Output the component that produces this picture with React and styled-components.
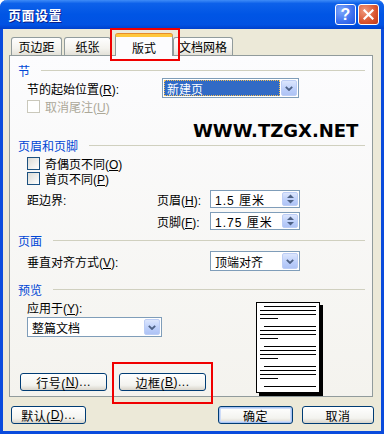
import React from 'react';
import styled, { createGlobalStyle, css } from 'styled-components';

const GlobalStyle = createGlobalStyle`
  html, body { margin: 0; padding: 0; background: #fff; }
  body {
    font-family: "Liberation Sans", "Noto Sans CJK SC", sans-serif;
    font-size: 12px;
    color: #000;
  }
`;

const Window = styled.div`
  position: relative;
  width: 384px;
  height: 434px;
  box-sizing: border-box;
  border: 3px solid #0A4BDD;
  border-top: none;
  border-radius: 7px 7px 0 0;
  background: #ECE9D8;
  display: flex;
  flex-direction: column;
`;

const TitleBar = styled.div`
  height: 29px;
  margin: 0 -3px;
  border-radius: 7px 7px 0 0;
  background: linear-gradient(#3F8CF7 0%, #0D61EA 12%, #0055E5 50%, #0152E3 85%, #0040CC 100%);
  display: flex;
  align-items: center;
  padding: 0 5px 0 8px;
  box-sizing: border-box;
`;

const Title = styled.div`
  flex: 1;
  color: #fff;
  font-weight: bold;
  font-size: 13px;
  letter-spacing: 0.5px;
  text-shadow: 1px 1px #0A1E8C;
`;

const CapButton = styled.div`
  width: 21px;
  height: 21px;
  box-sizing: border-box;
  border: 1px solid #fff;
  border-radius: 3px;
  margin-left: 2px;
  display: flex;
  align-items: center;
  justify-content: center;
  color: #fff;
  font-weight: bold;
  font-size: 16px;
  background: ${p => p.$close
    ? 'radial-gradient(circle at 30% 30%, #F09A7D, #D9532E 60%, #C0391A)'
    : 'radial-gradient(circle at 30% 30%, #7EA8FB, #3C6FEF 60%, #2155DF)'};
`;

const Body = styled.div`
  flex: 1;
  display: flex;
  flex-direction: column;
`;

const TabRow = styled.div`
  display: flex;
  align-items: flex-end;
  margin-top: 5px;
  height: 21px;
  padding-left: 8px;
`;

const Tab = styled.div`
  position: relative;
  box-sizing: border-box;
  width: ${p => p.$w}px;
  margin-left: ${p => p.$ml || 0}px;
  height: 18px;
  border: 1px solid #919B9C;
  border-bottom: none;
  border-radius: 3px 3px 0 0;
  background: linear-gradient(#FEFEFE, #F4F3EE 60%, #E3E1D8);
  display: flex;
  align-items: center;
  justify-content: center;
  font-size: 12px;
  ${p => p.$active && css`
    z-index: 2;
    height: 22px;
    margin-bottom: -1px;
    background: #FCFCFE;
    border-top: 3px solid #FFC83C;
    box-shadow: 0 -1px 0 #E68B2C;
    padding-top: 1px;
  `}
`;

const Panel = styled.div`
  position: relative;
  margin-left: 6px;
  width: 364px;
  height: 342px;
  box-sizing: border-box;
  border: 1px solid #919B9C;
  background: linear-gradient(#FCFCFE, #F4F3EE);
  padding: 7px 7px 0 8px;
  display: flex;
  flex-direction: column;
`;

const SectionHeader = styled.div`
  display: flex;
  align-items: center;
  gap: 11px;
  height: 14px;
  margin-top: ${p => p.$mt || 0}px;
  color: #0046D5;
  &::after {
    content: "";
    flex: 1;
    height: 1px;
    background: #D0D0BF;
  }
`;

const Row = styled.div`
  display: flex;
  align-items: center;
  height: ${p => p.$h || 20}px;
  margin-top: ${p => p.$mt || 0}px;
  margin-left: ${p => (p.$ml === undefined ? 9 : p.$ml)}px;
  color: ${p => (p.$disabled ? '#ACA899' : '#000')};
`;

const Label = styled.div`
  width: ${p => (p.$w ? `${p.$w}px` : 'auto')};
  flex-shrink: 0;
  white-space: nowrap;
`;

const Key = styled.span`
  text-decoration: underline;
`;

const CheckBox = styled.div`
  width: 13px;
  height: 13px;
  box-sizing: border-box;
  margin-right: 5px;
  border: 1px solid ${p => (p.$disabled ? '#CAC8BB' : '#1C5180')};
  background: ${p => (p.$disabled ? '#fff' : 'linear-gradient(135deg, #DCDBD5, #FFFFFF)')};
`;

const Field = styled.div`
  width: ${p => p.$w}px;
  height: ${p => p.$h || 20}px;
  box-sizing: border-box;
  border: 1px solid #7F9DB9;
  background: #fff;
  display: flex;
  align-items: stretch;
  padding: 1px;
  flex-shrink: 0;
`;

const FieldValue = styled.div`
  flex: 1;
  display: flex;
  align-items: center;
  padding-left: 3px;
  margin-right: 1px;
  white-space: nowrap;
  letter-spacing: ${p => (p.$spaced ? '1px' : '0')};
  ${p => p.$focus && css`
    background: #316AC5;
    color: #fff;
    outline: 1px dotted #F4C054;
    outline-offset: -1px;
  `}
`;

const DropButton = styled.div`
  width: 16px;
  box-sizing: border-box;
  border: 1px solid #BCCDF5;
  border-radius: 2px;
  background: linear-gradient(#DCE6FD, #BBCEFA 60%, #AEC3F5);
  display: flex;
  flex-direction: column;
  align-items: center;
  justify-content: center;
  gap: 2px;
`;

const Button = styled.div`
  width: ${p => p.$w}px;
  height: 18px;
  box-sizing: border-box;
  margin-left: ${p => p.$ml || 0}px;
  border: 1px solid #003C74;
  border-radius: 3px;
  background: linear-gradient(#FFFFFF, #F3F3EF 70%, #D8D4CA);
  display: flex;
  align-items: center;
  justify-content: center;
  letter-spacing: 0.5px;
  white-space: nowrap;
  ${p => p.$default && css`
    box-shadow: inset 0 0 0 1px #A8C4F2, inset 0 0 0 2px #CEDCF8;
  `}
`;

const PreviewBody = styled.div`
  display: flex;
`;

const PreviewLeft = styled.div`
  width: 238px;
  display: flex;
  flex-direction: column;
`;

const ButtonRow = styled.div`
  display: flex;
  gap: 12px;
  margin-left: 2px;
  margin-top: 36px;
`;

const PageWrap = styled.div`
  margin-top: 6px;
`;

const Footer = styled.div`
  display: flex;
  margin-top: 9px;
  padding: 0 7px 0 8px;
`;

const Spacer = styled.div`
  flex: 1;
`;

const Watermark = styled.div`
  position: absolute;
  left: 183px;
  top: 64px;
  font-family: "DejaVu Sans", sans-serif;
  font-weight: bold;
  font-size: 18px;
  line-height: 22px;
  color: #000;
`;

const Highlight = styled.div`
  position: absolute;
  z-index: 5;
  box-sizing: border-box;
  border: 2px solid #F00000;
  left: ${p => p.$x}px;
  top: ${p => p.$y}px;
  width: ${p => p.$w}px;
  height: ${p => p.$h}px;
  pointer-events: none;
`;

const Chevron = () => (
  <svg width="8" height="5" viewBox="0 0 8 5">
    <path d="M0.8 0.8 L4 4 L7.2 0.8" fill="none" stroke="#4D6185" strokeWidth="1.8" />
  </svg>
);

const SpinArrows = () => (
  <>
    <svg width="7" height="4" viewBox="0 0 7 4"><path d="M0 4 L3.5 0.5 L7 4 Z" fill="#4D6185" /></svg>
    <svg width="7" height="4" viewBox="0 0 7 4"><path d="M0 0 L3.5 3.5 L7 0 Z" fill="#4D6185" /></svg>
  </>
);

const Dropdown = ({ w, h, value, focus }) => (
  <Field $w={w} $h={h}>
    <FieldValue $focus={focus}>{value}</FieldValue>
    <DropButton><Chevron /></DropButton>
  </Field>
);

const Spin = ({ value }) => (
  <Field $w={90} $h={18}>
    <FieldValue $spaced>{value}</FieldValue>
    <DropButton><SpinArrows /></DropButton>
  </Field>
);

const PagePreview = () => {
  const bars = [];
  for (let g = 0; g < 5; g++) {
    const y = 4 + g * 20;
    bars.push(<rect key={`a${g}`} x="8" y={y} width="52" height="1" />);
    if (g < 4) {
      bars.push(<rect key={`b${g}`} x="4" y={y + 4} width="56" height="1" />);
      bars.push(<rect key={`c${g}`} x="4" y={y + 8} width="56" height="1" />);
      bars.push(<rect key={`d${g}`} x="4" y={y + 12} width="18" height="1" />);
    }
  }
  return (
    <svg width="67" height="94" viewBox="0 0 67 94">
      <rect x="3" y="3" width="64" height="91" fill="#000" />
      <rect x="0.5" y="0.5" width="63" height="90" fill="#fff" stroke="#000" />
      <g fill="#000">{bars}</g>
    </svg>
  );
};

export default function App() {
  return (
    <>
      <GlobalStyle />
      <Window>
        <TitleBar>
          <Title>页面设置</Title>
          <CapButton>?</CapButton>
          <CapButton $close>
            <svg width="11" height="11" viewBox="0 0 11 11">
              <path d="M1.5 1.5 L9.5 9.5 M9.5 1.5 L1.5 9.5" stroke="#fff" strokeWidth="2.2" strokeLinecap="square" />
            </svg>
          </CapButton>
        </TitleBar>
        <Body>
          <TabRow>
            <Tab $w={51}>页边距</Tab>
            <Tab $w={47} $ml={2}>纸张</Tab>
            <Tab $w={58} $ml={4} $active>版式</Tab>
            <Tab $w={60}>文档网格</Tab>
          </TabRow>
          <Panel>
            <Watermark>WWW.TZGX.NET</Watermark>

            <SectionHeader>节</SectionHeader>
            <Row $mt={1}>
              <Label $w={135}>节的起始位置(<Key>R</Key>):</Label>
              <Dropdown w={137} value="新建页" focus />
            </Row>
            <Row $mt={2} $h={13} $disabled>
              <CheckBox $disabled />
              <Label>取消尾注(<Key>U</Key>)</Label>
            </Row>

            <SectionHeader $mt={25}>页眉和页脚</SectionHeader>
            <Row $mt={5} $h={13}>
              <CheckBox />
              <Label>奇偶页不同(<Key>O</Key>)</Label>
            </Row>
            <Row $mt={2} $h={13}>
              <CheckBox />
              <Label>首页不同(<Key>P</Key>)</Label>
            </Row>
            <Row $mt={5} $h={18}>
              <Label $w={130}>距边界:</Label>
              <Label $w={53}>页眉(<Key>H</Key>):</Label>
              <Spin value="1.5 厘米" />
            </Row>
            <Row $mt={4} $h={18}>
              <Label $w={130}></Label>
              <Label $w={53}>页脚(<Key>F</Key>):</Label>
              <Spin value="1.75 厘米" />
            </Row>

            <SectionHeader $mt={3}>页面</SectionHeader>
            <Row $mt={4}>
              <Label $w={183}>垂直对齐方式(<Key>V</Key>):</Label>
              <Dropdown w={90} value="顶端对齐" />
            </Row>

            <SectionHeader $mt={11}>预览</SectionHeader>
            <PreviewBody>
              <PreviewLeft>
                <Row $mt={4} $h={14}>
                  <Label>应用于(<Key>Y</Key>):</Label>
                </Row>
                <Row $mt={3}>
                  <Dropdown w={135} value="整篇文档" />
                </Row>
                <ButtonRow>
                  <Button $w={87}>行号(<Key>N</Key>)...</Button>
                  <Button $w={87}>边框(<Key>B</Key>)...</Button>
                </ButtonRow>
              </PreviewLeft>
              <PageWrap>
                <PagePreview />
              </PageWrap>
            </PreviewBody>
          </Panel>
          <Footer>
            <Button $w={75}>默认(<Key>D</Key>)...</Button>
            <Spacer />
            <Button $w={75} $default>确定</Button>
            <Button $w={72} $ml={9}>取消</Button>
          </Footer>
        </Body>
        <Highlight $x={107} $y={28} $w={70} $h={33} />
        <Highlight $x={109} $y={362} $w={101} $h={42} />
      </Window>
    </>
  );
}
